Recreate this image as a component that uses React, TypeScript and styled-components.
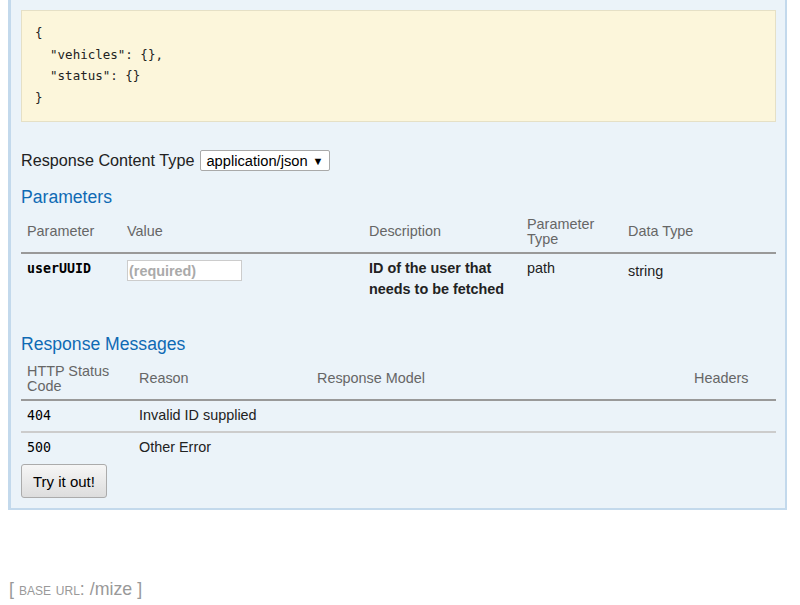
import React from "react";
import styled, { createGlobalStyle } from "styled-components";

const GlobalStyle = createGlobalStyle`
  body {
    margin: 0;
    background: #ffffff;
    font-family: "Liberation Sans", Arial, sans-serif;
    color: #222222;
  }
`;

const Page = styled.div`
  padding: 0 13px 0 8px;
`;

const Content = styled.div`
  background-color: #ebf3f9;
  border: 2px solid #c3d9ec;
  border-left-width: 3px;
  border-top: none;
  padding: 10px 9px 10px 10px;
`;

const Snippet = styled.pre`
  margin: 0;
  padding: 11px 12px 13px 13px;
  background-color: #fcf6db;
  border: 1px solid #e5e0c6;
  font-family: "DejaVu Sans Mono", "Liberation Mono", monospace;
  font-size: 12.5px;
  line-height: 21.5px;
  color: #222222;
`;

const ContentTypeRow = styled.div`
  display: flex;
  align-items: center;
  gap: 6px;
  height: 21px;
  margin-top: 28px;
  font-size: 16.2px;
`;

const SelectBox = styled.div`
  display: flex;
  align-items: center;
  justify-content: space-between;
  box-sizing: border-box;
  width: 130px;
  height: 21px;
  padding: 0 6px 0 5px;
  background: #ffffff;
  border: 1px solid #a9a9a9;
  border-radius: 2px;
  font-size: 14.7px;
  color: #000000;

  span:last-child {
    font-size: 11px;
  }
`;

const SectionTitle = styled.h4<{ $gap: number }>`
  margin: ${(p) => p.$gap}px 0 0;
  font-size: 17.6px;
  line-height: 20px;
  font-weight: normal;
  color: #0f6ab4;
`;

const Table = styled.table`
  width: 100%;
  table-layout: fixed;
  border-collapse: separate;
  border-spacing: 0;
  font-size: 14.4px;
`;

const Th = styled.th`
  padding: 10px 6px 6px;
  line-height: 14.5px;
  text-align: left;
  vertical-align: middle;
  font-weight: normal;
  color: #666666;
  border-bottom: 2px solid #999999;
`;

const Td = styled.td<{ $bold?: boolean; $mono?: boolean; $shift?: number; $divided?: boolean }>`
  padding: ${(p) => 4 + (p.$shift ?? 0)}px 6px 5px;
  line-height: 21px;
  vertical-align: top;
  color: ${(p) => (p.$mono ? "#000000" : "#222222")};
  font-weight: ${(p) => (p.$bold ? "bold" : "normal")};
  font-family: ${(p) =>
    p.$mono ? `"DejaVu Sans Mono", "Liberation Mono", monospace` : "inherit"};
  font-size: ${(p) => (p.$mono ? "13.3px" : "inherit")};
  border-top: ${(p) => (p.$divided ? "2px solid #cccccc" : "none")};
`;

const ValueInput = styled.input`
  display: block;
  box-sizing: border-box;
  width: 115px;
  height: 21px;
  margin: 2px 0 0;
  padding: 0 1px;
  border: 1px solid #cccccc;
  background: #ffffff;
  font-family: "Liberation Sans", Arial, sans-serif;
  font-size: 14.4px;
  font-weight: bold;

  &::placeholder {
    color: #aaaaaa;
  }
`;

const TryButton = styled.button`
  display: block;
  height: 34px;
  margin-top: 1px;
  padding: 0 11px;
  border: 1px solid #ababab;
  border-radius: 3px;
  background: linear-gradient(#f6f6f6, #dddddd);
  font-family: "Liberation Sans", Arial, sans-serif;
  font-size: 15px;
  color: #000000;
`;

const Footer = styled.h4`
  margin: 69px 0 0 1px;
  font-size: 17.8px;
  line-height: 20px;
  font-weight: normal;
  color: #999999;
`;

const SmallCaps = styled.span`
  font-variant: small-caps;
`;

const sample = `{
  "vehicles": {},
  "status": {}
}`;

const responses = [
  { code: "404", reason: "Invalid ID supplied" },
  { code: "500", reason: "Other Error" }
];

export default function App() {
  return (
    <Page>
      <GlobalStyle />
      <Content>
        <Snippet>{sample}</Snippet>

        <ContentTypeRow>
          <span>Response Content Type</span>
          <SelectBox>
            <span>application/json</span>
            <span>▼</span>
          </SelectBox>
        </ContentTypeRow>

        <SectionTitle $gap={16}>Parameters</SectionTitle>
        <Table>
          <colgroup>
            <col style={{ width: 100 }} />
            <col style={{ width: 242 }} />
            <col style={{ width: 158 }} />
            <col style={{ width: 101 }} />
            <col />
          </colgroup>
          <thead>
            <tr>
              <Th>Parameter</Th>
              <Th>Value</Th>
              <Th>Description</Th>
              <Th>
                Parameter
                <br />
                Type
              </Th>
              <Th>Data Type</Th>
            </tr>
          </thead>
          <tbody>
            <tr>
              <Td $mono $bold>
                userUUID
              </Td>
              <Td>
                <ValueInput placeholder="(required)" />
              </Td>
              <Td $bold>ID of the user that needs to be fetched</Td>
              <Td>path</Td>
              <Td $shift={3}>string</Td>
            </tr>
          </tbody>
        </Table>

        <SectionTitle $gap={29}>Response Messages</SectionTitle>
        <Table>
          <colgroup>
            <col style={{ width: 112 }} />
            <col style={{ width: 178 }} />
            <col />
            <col style={{ width: 88 }} />
          </colgroup>
          <thead>
            <tr>
              <Th>
                HTTP Status
                <br />
                Code
              </Th>
              <Th>Reason</Th>
              <Th>Response Model</Th>
              <Th>Headers</Th>
            </tr>
          </thead>
          <tbody>
            {responses.map((r, i) => (
              <tr key={r.code}>
                <Td $mono $divided={i > 0}>
                  {r.code}
                </Td>
                <Td $divided={i > 0}>{r.reason}</Td>
                <Td $divided={i > 0} />
                <Td $divided={i > 0} />
              </tr>
            ))}
          </tbody>
        </Table>

        <TryButton type="button">Try it out!</TryButton>
      </Content>

      <Footer>
        [ <SmallCaps>base url</SmallCaps>: /mize ]
      </Footer>
    </Page>
  );
}
